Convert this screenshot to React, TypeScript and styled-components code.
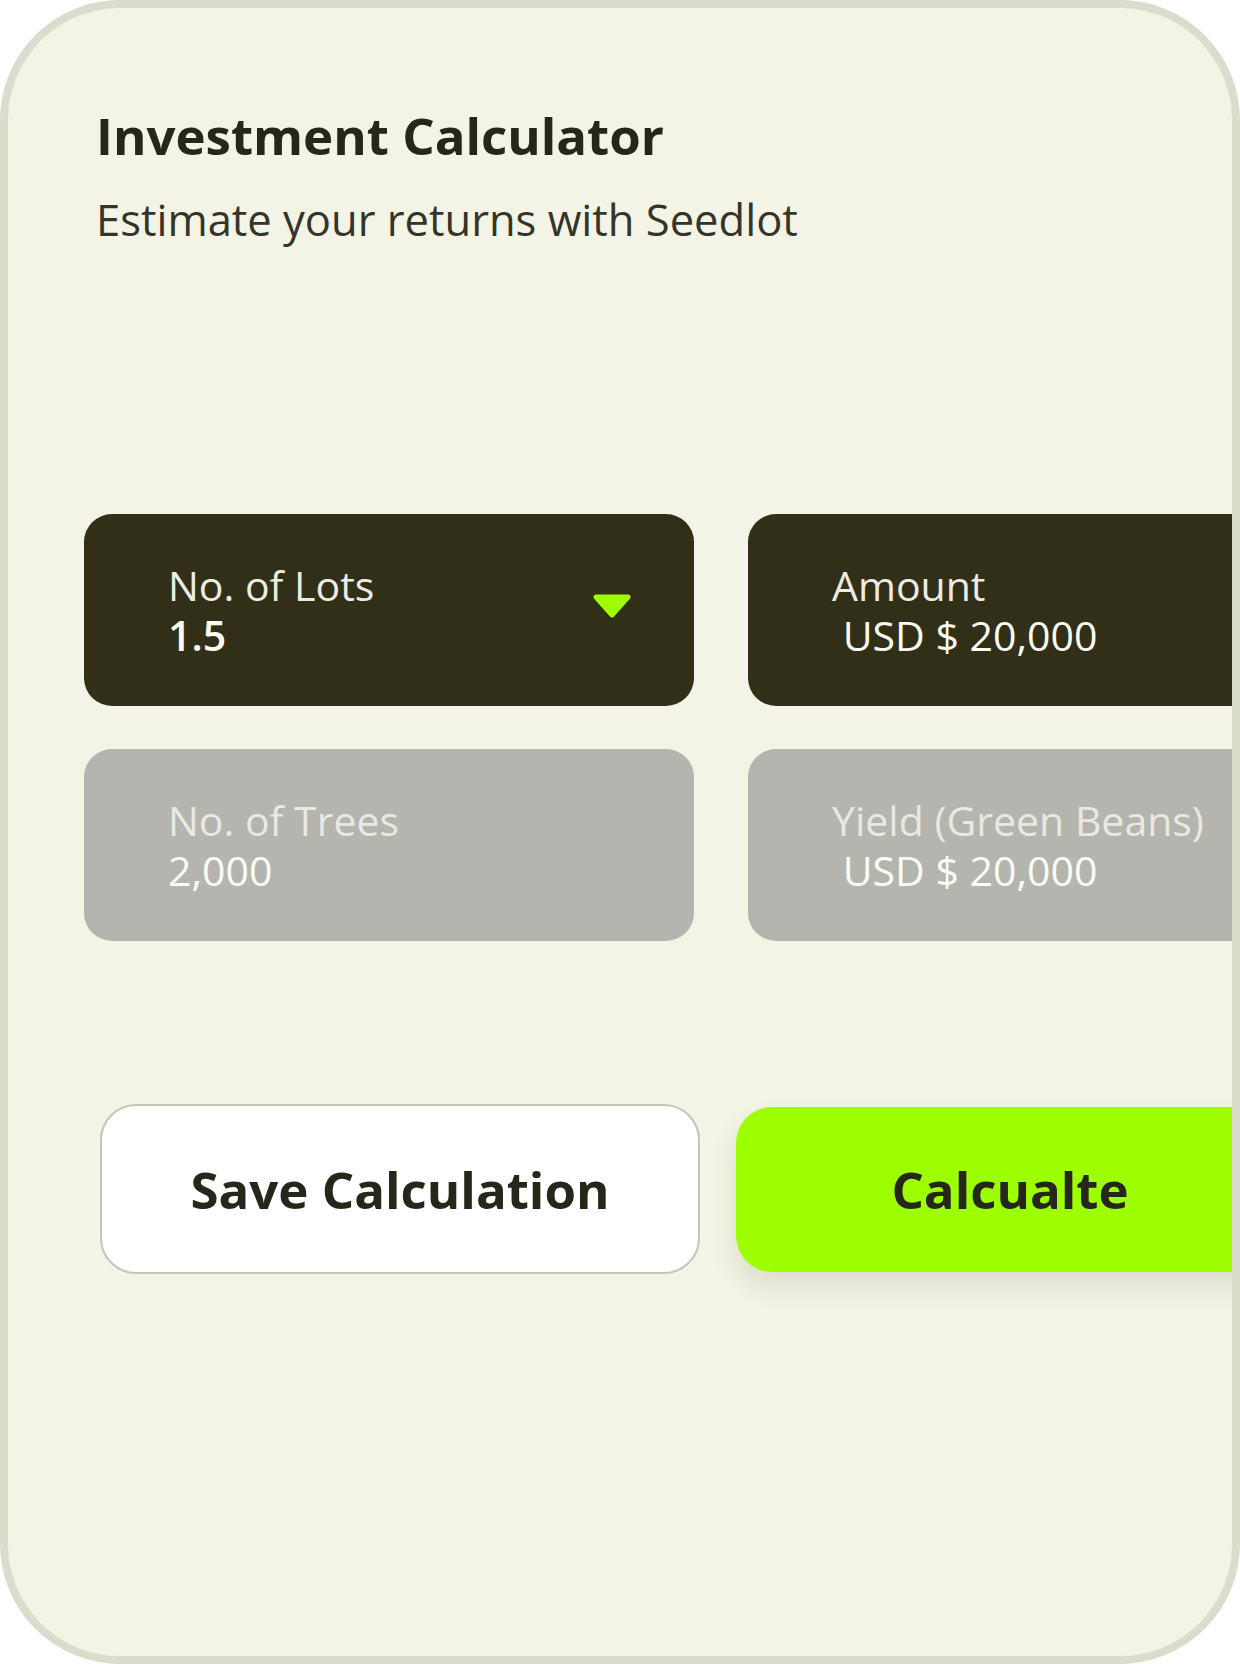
import React from "react";
import styled, { createGlobalStyle } from "styled-components";

const GlobalStyle = createGlobalStyle`
  html, body {
    margin: 0;
    padding: 0;
    background: #ffffff;
  }
  * {
    box-sizing: border-box;
  }
`;

const Card = styled.main`
  width: 1240px;
  height: 1664px;
  border: 8px solid #dcdccd;
  border-radius: 120px;
  background: #f4f4e6;
  overflow: hidden;
  padding: 97px 0 0 76px;
  font-family: "Open Sans", "Noto Sans", sans-serif;
`;

const Header = styled.header`
  margin-left: 12px;
`;

const Title = styled.h1`
  margin: 0;
  font-size: 51px;
  line-height: 60px;
  font-weight: 700;
  color: #26261a;
`;

const Subtitle = styled.p`
  margin: 29px 0 0;
  font-size: 43.5px;
  line-height: 52px;
  font-weight: 400;
  color: #34342a;
`;

const FieldGrid = styled.section`
  display: grid;
  grid-template-columns: 610px 610px;
  column-gap: 54px;
  row-gap: 43px;
  margin-top: 268px;
`;

const Field = styled.div<{ $tone: "dark" | "muted" }>`
  height: 192px;
  display: flex;
  align-items: center;
  justify-content: space-between;
  padding: 0 62px 0 84px;
  border-radius: 28px;
  background: ${({ $tone }) => ($tone === "dark" ? "#322f18" : "#b3b5ae")};
  color: ${({ $tone }) => ($tone === "dark" ? "#ecece4" : "rgba(246, 246, 238, 0.82)")};
`;

const FieldText = styled.div`
  display: flex;
  flex-direction: column;
  white-space: pre;
`;

const Label = styled.span`
  font-size: 41px;
  line-height: 50px;
  font-weight: 400;
`;

const Value = styled.span<{ $weight: number }>`
  font-size: 41px;
  line-height: 50px;
  font-weight: ${({ $weight }) => $weight};
  color: #fbfbf5;
`;

const Caret = styled.svg`
  width: 40px;
  height: 26px;
  margin-bottom: 8px;
  flex-shrink: 0;
`;

const Actions = styled.div`
  display: flex;
  align-items: center;
  gap: 36px;
  margin: 163px 0 0 16px;
`;

const Button = styled.button<{ $primary?: boolean }>`
  flex-shrink: 0;
  width: ${({ $primary }) => ($primary ? "548px" : "600px")};
  height: ${({ $primary }) => ($primary ? "165px" : "170px")};
  border-radius: 36px;
  border: ${({ $primary }) => ($primary ? "none" : "2px solid #c5c5b9")};
  background: ${({ $primary }) => ($primary ? "#9eff00" : "#ffffff")};
  box-shadow: ${({ $primary }) => ($primary ? "0 14px 26px rgba(60, 60, 30, 0.12)" : "none")};
  font-family: "Open Sans", "Noto Sans", sans-serif;
  font-size: 51px;
  font-weight: 700;
  color: #26261a;
  cursor: pointer;
`;

type FieldItem = {
  label: string;
  value: string;
  tone: "dark" | "muted";
  weight: number;
  dropdown?: boolean;
};

const fields: FieldItem[] = [
  { label: "No. of Lots", value: "1.5", tone: "dark", weight: 600, dropdown: true },
  { label: "Amount", value: " USD $ 20,000", tone: "dark", weight: 400 },
  { label: "No. of Trees", value: "2,000", tone: "muted", weight: 500 },
  { label: "Yield (Green Beans)", value: " USD $ 20,000", tone: "muted", weight: 500 },
];

export default function App() {
  return (
    <>
      <GlobalStyle />
      <Card>
        <Header>
          <Title>Investment Calculator</Title>
          <Subtitle>Estimate your returns with Seedlot</Subtitle>
        </Header>

        <FieldGrid>
          {fields.map((f) => (
            <Field key={f.label} $tone={f.tone}>
              <FieldText>
                <Label>{f.label}</Label>
                <Value $weight={f.weight}>{f.value}</Value>
              </FieldText>
              {f.dropdown && (
                <Caret viewBox="0 0 40 26" aria-hidden="true">
                  <path
                    d="M4 4 L36 4 L20 22 Z"
                    fill="#9eff00"
                    stroke="#9eff00"
                    strokeWidth="5"
                    strokeLinejoin="round"
                  />
                </Caret>
              )}
            </Field>
          ))}
        </FieldGrid>

        <Actions>
          <Button type="button">Save Calculation</Button>
          <Button type="button" $primary>
            Calcualte
          </Button>
        </Actions>
      </Card>
    </>
  );
}
